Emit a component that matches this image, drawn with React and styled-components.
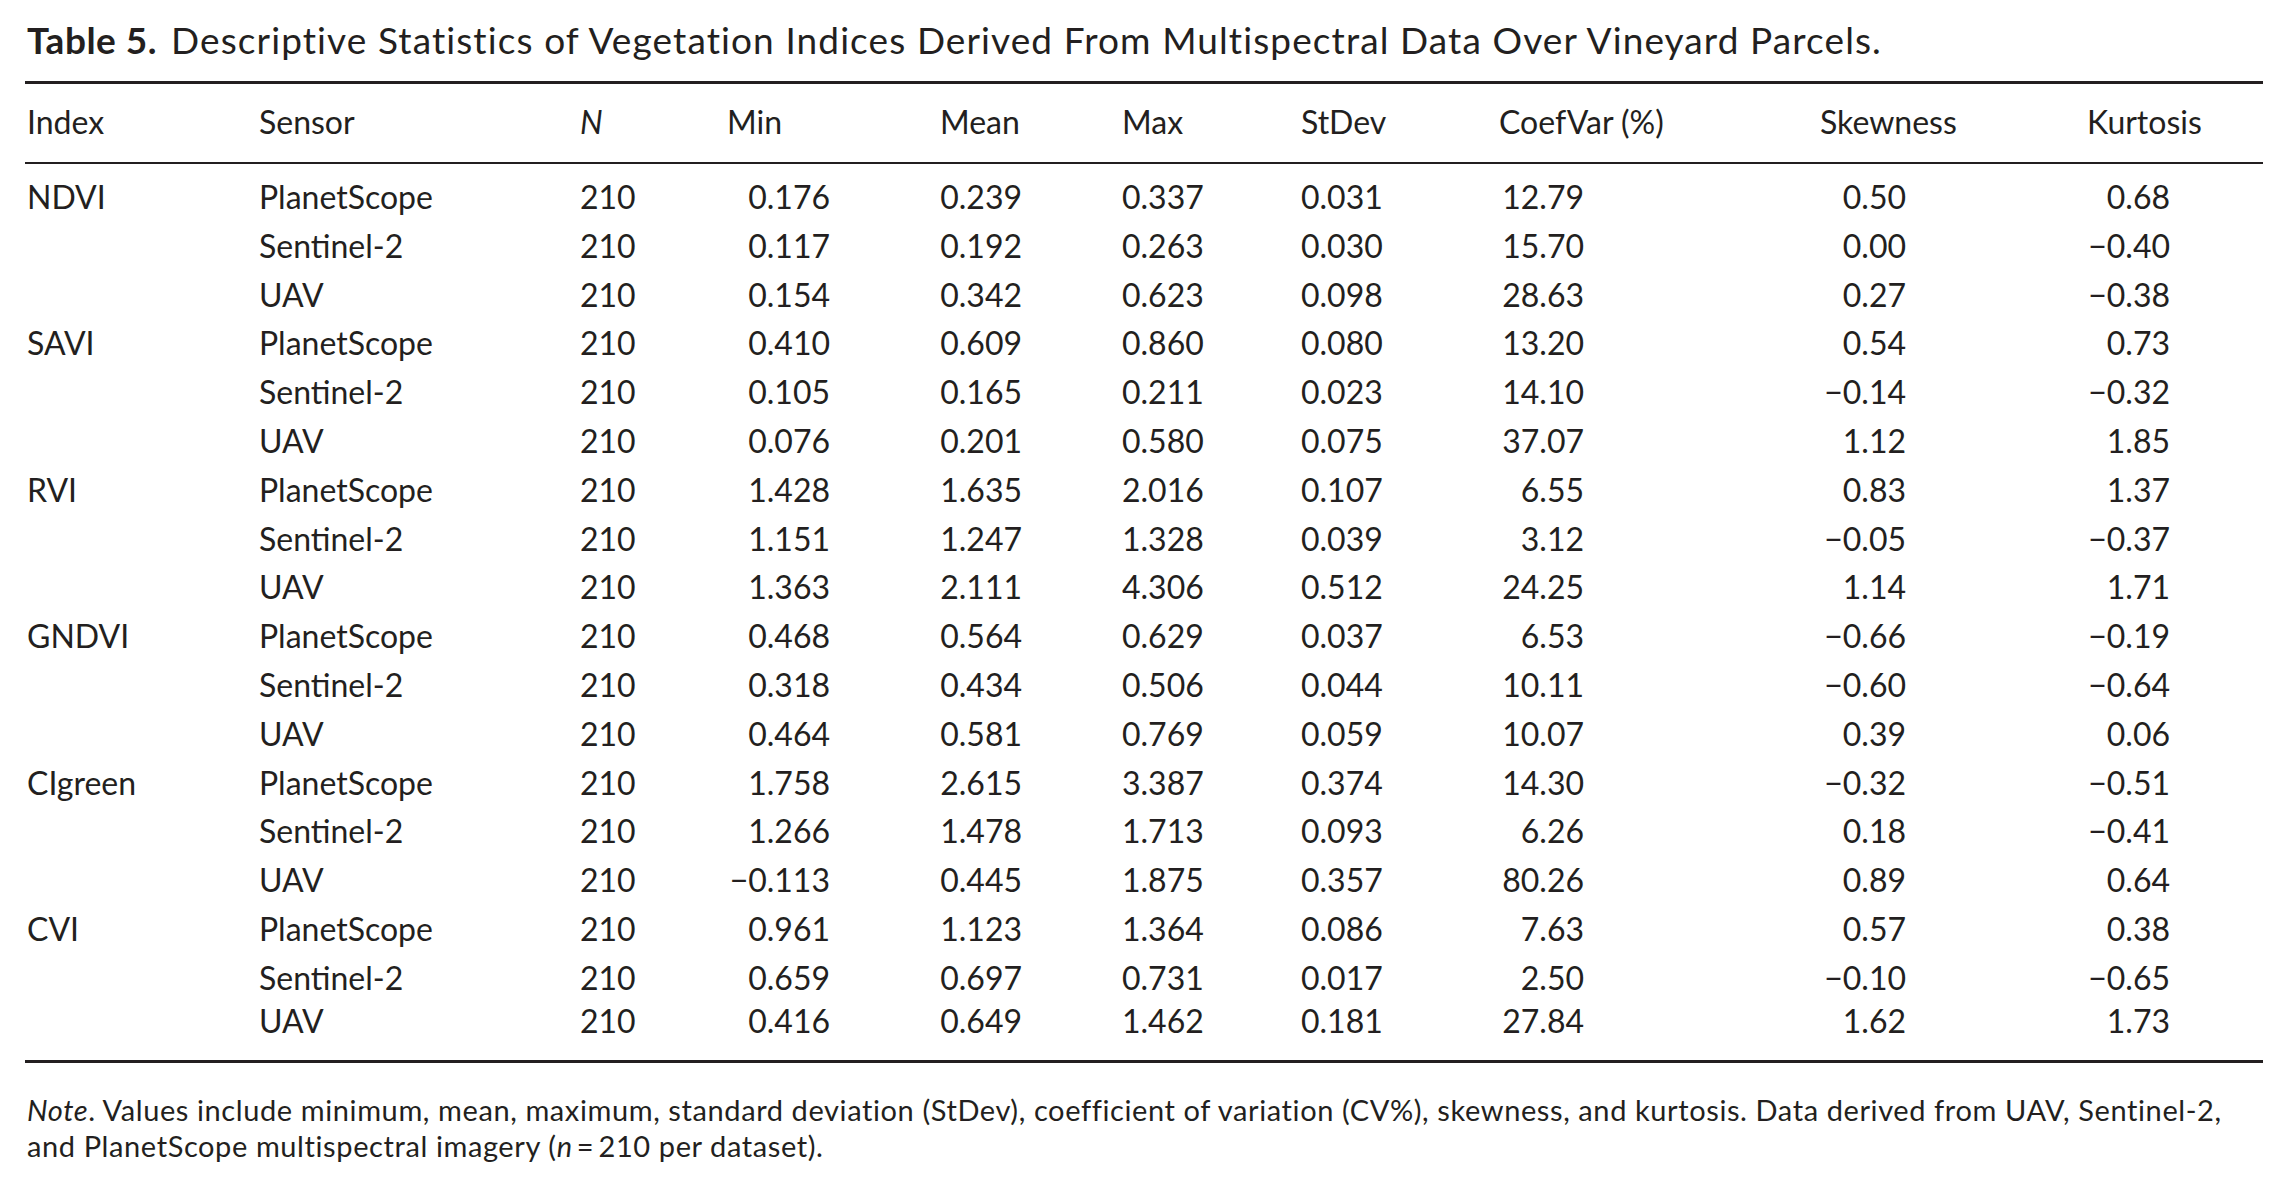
import React from "react";
import styled, { createGlobalStyle, css } from "styled-components";

const Global = createGlobalStyle`
  html, body { margin: 0; padding: 0; background: #ffffff; }
  body { font-family: Lato, "Open Sans", sans-serif; color: #231f20; }
`;

const Page = styled.div`
  width: 2238px;
  padding: 17.5px 26px 0 25px;
`;

const Title = styled.h1`
  margin: 0 0 19px 2px;
  font-size: 37px;
  line-height: 1.2;
  font-weight: 400;
  letter-spacing: 1.1px;
  white-space: nowrap;
`;

const TitleLabel = styled.span`
  font-weight: 700;
  letter-spacing: 0.5px;
  margin-right: 14px;
`;

const Table = styled.div`
  border-top: 3px solid #231f20;
  border-bottom: 3px solid #231f20;
`;

const gridCols = css`
  display: grid;
  grid-template-columns: 232px 321px 147px 213px 182px 179px 198px 321px 267px 178px;
  font-size: 32px;
`;

const HeadRow = styled.div`
  ${gridCols};
  line-height: 48.8px;
  padding: 14.2px 0 15px;
  border-bottom: 2px solid #231f20;
`;

const Body = styled.div`
  padding: 9.2px 0 22.2px;
`;

const Row = styled.div`
  ${gridCols};
  line-height: ${(p) => (p.$tight ? "35px" : "48.8px")};
`;

const Cell = styled.div`
  padding-left: 2px;
  white-space: nowrap;
  font-style: ${(p) => (p.$italic ? "italic" : "normal")};
`;

const Num = styled.span`
  display: inline-block;
  width: ${(p) => p.$w}px;
  text-align: right;
`;

const Note = styled.p`
  margin: 29px 0 0 2px;
  font-size: 29px;
  line-height: 36px;
  letter-spacing: 0.6px;
  white-space: nowrap;
`;

const widths = [103, 82, 80, 81, 85, 86, 83];
const heads = ["Min", "Mean", "Max", "StDev", "CoefVar (%)", "Skewness", "Kurtosis"];

const M = "\u2212";
const data = [
  ["NDVI", [
    ["PlanetScope", "0.176", "0.239", "0.337", "0.031", "12.79", "0.50", "0.68"],
    ["Sentinel-2", "0.117", "0.192", "0.263", "0.030", "15.70", "0.00", M + "0.40"],
    ["UAV", "0.154", "0.342", "0.623", "0.098", "28.63", "0.27", M + "0.38"],
  ]],
  ["SAVI", [
    ["PlanetScope", "0.410", "0.609", "0.860", "0.080", "13.20", "0.54", "0.73"],
    ["Sentinel-2", "0.105", "0.165", "0.211", "0.023", "14.10", M + "0.14", M + "0.32"],
    ["UAV", "0.076", "0.201", "0.580", "0.075", "37.07", "1.12", "1.85"],
  ]],
  ["RVI", [
    ["PlanetScope", "1.428", "1.635", "2.016", "0.107", "6.55", "0.83", "1.37"],
    ["Sentinel-2", "1.151", "1.247", "1.328", "0.039", "3.12", M + "0.05", M + "0.37"],
    ["UAV", "1.363", "2.111", "4.306", "0.512", "24.25", "1.14", "1.71"],
  ]],
  ["GNDVI", [
    ["PlanetScope", "0.468", "0.564", "0.629", "0.037", "6.53", M + "0.66", M + "0.19"],
    ["Sentinel-2", "0.318", "0.434", "0.506", "0.044", "10.11", M + "0.60", M + "0.64"],
    ["UAV", "0.464", "0.581", "0.769", "0.059", "10.07", "0.39", "0.06"],
  ]],
  ["CIgreen", [
    ["PlanetScope", "1.758", "2.615", "3.387", "0.374", "14.30", M + "0.32", M + "0.51"],
    ["Sentinel-2", "1.266", "1.478", "1.713", "0.093", "6.26", "0.18", M + "0.41"],
    ["UAV", M + "0.113", "0.445", "1.875", "0.357", "80.26", "0.89", "0.64"],
  ]],
  ["CVI", [
    ["PlanetScope", "0.961", "1.123", "1.364", "0.086", "7.63", "0.57", "0.38"],
    ["Sentinel-2", "0.659", "0.697", "0.731", "0.017", "2.50", M + "0.10", M + "0.65"],
    ["UAV", "0.416", "0.649", "1.462", "0.181", "27.84", "1.62", "1.73"],
  ]],
];

export default function App() {
  const rows = [];
  data.forEach(([index, sensors], gi) => {
    sensors.forEach(([sensor, ...vals], si) => {
      const last = gi === data.length - 1 && si === sensors.length - 1;
      rows.push(
        <Row key={index + sensor} $tight={last}>
          <Cell>{si === 0 ? index : ""}</Cell>
          <Cell>{sensor}</Cell>
          <Cell>210</Cell>
          {vals.map((v, i) => (
            <Cell key={i}>
              <Num $w={widths[i]}>{v}</Num>
            </Cell>
          ))}
        </Row>
      );
    });
  });

  return (
    <>
      <Global />
      <Page>
        <Title>
          <TitleLabel>Table 5.</TitleLabel>
          Descriptive Statistics of Vegetation Indices Derived From Multispectral Data Over Vineyard Parcels.
        </Title>
        <Table>
          <HeadRow>
            <Cell>Index</Cell>
            <Cell>Sensor</Cell>
            <Cell $italic>N</Cell>
            {heads.map((h) => (
              <Cell key={h}>{h}</Cell>
            ))}
          </HeadRow>
          <Body>{rows}</Body>
        </Table>
        <Note>
          <i>Note</i>. Values include minimum, mean, maximum, standard deviation (StDev), coefficient of variation (CV%), skewness, and kurtosis. Data derived from UAV, Sentinel-2,
          <br />
          and PlanetScope multispectral imagery (<i>n</i>{"\u2009=\u2009"}210 per dataset).
        </Note>
      </Page>
    </>
  );
}
